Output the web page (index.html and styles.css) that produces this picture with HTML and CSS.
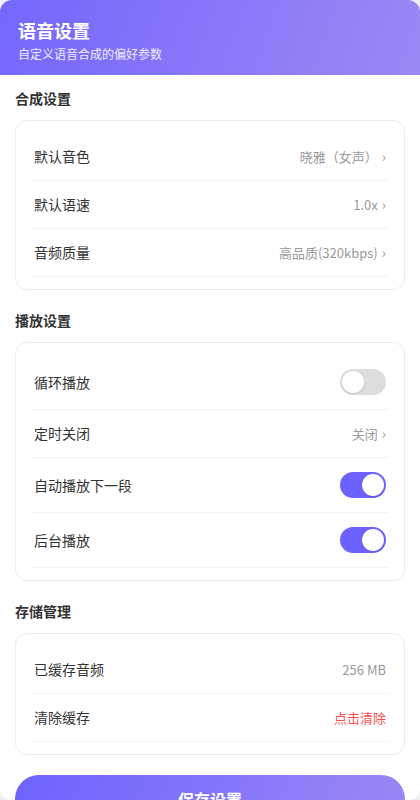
FILE: index.html
```html
<!DOCTYPE html>
<html lang="zh-CN">
<head>
<meta charset="utf-8">
<title>语音设置</title>
<link rel="stylesheet" href="styles.css">
</head>
<body>
<div class="app">
  <header class="header">
    <h1 class="title">语音设置</h1>
    <p class="subtitle">自定义语音合成的偏好参数</p>
  </header>
  <main class="content">
    <section class="section">
      <h2 class="section-title">合成设置</h2>
      <div class="card">
        <div class="row"><span class="label">默认音色</span><span class="value">晓雅（女声）<span class="chev">›</span></span></div>
        <div class="row"><span class="label">默认语速</span><span class="value">1.0x<span class="chev">›</span></span></div>
        <div class="row"><span class="label">音频质量</span><span class="value">高品质(320kbps)<span class="chev">›</span></span></div>
      </div>
    </section>
    <section class="section">
      <h2 class="section-title">播放设置</h2>
      <div class="card">
        <div class="row row-toggle"><span class="label">循环播放</span><span class="toggle"><span class="knob"></span></span></div>
        <div class="row"><span class="label">定时关闭</span><span class="value">关闭<span class="chev">›</span></span></div>
        <div class="row row-toggle"><span class="label">自动播放下一段</span><span class="toggle on"><span class="knob"></span></span></div>
        <div class="row row-toggle"><span class="label">后台播放</span><span class="toggle on"><span class="knob"></span></span></div>
      </div>
    </section>
    <section class="section">
      <h2 class="section-title">存储管理</h2>
      <div class="card">
        <div class="row"><span class="label">已缓存音频</span><span class="value">256 MB</span></div>
        <div class="row"><span class="label">清除缓存</span><span class="value danger">点击清除</span></div>
      </div>
    </section>
    <button class="save">保存设置</button>
  </main>
</div>
</body>
</html>
```

FILE: styles.css
```css
* { box-sizing: border-box; }
html, body { margin: 0; padding: 0; }
body {
  background: #efeff1;
  font-family: "Noto Sans CJK SC", "Noto Sans", sans-serif;
  color: #333;
}
.app {
  width: 420px;
  height: 800px;
  overflow: hidden;
  background: #fff;
  border-radius: 12px;
}
.header {
  background: linear-gradient(110deg, #7467fd 0%, #9c88f5 100%);
  padding: 18px 18px 13px;
  color: #fff;
}
.title {
  margin: 0;
  font-size: 18px;
  line-height: 24px;
  font-weight: 700;
}
.subtitle {
  margin: 3px 0 0;
  font-size: 12px;
  line-height: 17px;
  opacity: 0.88;
}
.content {
  padding: 13px 15px 0;
}
.section { margin-bottom: 20px; }
.section-title {
  margin: 0 0 12px;
  font-size: 14px;
  line-height: 20px;
  font-weight: 700;
  color: #333;
}
.card {
  border: 1px solid #ececec;
  border-radius: 12px;
  padding: 12px 15px;
}
.row {
  display: flex;
  align-items: center;
  justify-content: space-between;
  padding: 14px 3px;
  border-bottom: 1px solid #f2f2f2;
  font-size: 14px;
  line-height: 19px;
}
.label { color: #333; }
.value {
  color: #999;
  font-size: 13px;
  display: flex;
  align-items: center;
}
.chev {
  margin-left: 4px;
  font-size: 14px;
  color: #999;
}
.danger { color: #ff4d4f; }
.toggle {
  width: 46px;
  height: 26px;
  border-radius: 13px;
  background: #dddddd;
  display: flex;
  align-items: center;
  padding: 2px;
}
.knob {
  width: 22px;
  height: 22px;
  border-radius: 50%;
  background: #fff;
  box-shadow: 0 1px 2px rgba(0,0,0,0.12);
}
.toggle.on {
  background: #6c63ff;
  justify-content: flex-end;
}
.save {
  display: block;
  width: 100%;
  height: 48px;
  border: none;
  border-radius: 24px;
  background: linear-gradient(110deg, #6c63ff 0%, #9b88f5 100%);
  color: #fff;
  font-family: inherit;
  font-size: 16px;
  font-weight: 700;
  margin-top: 1px;
}
```
